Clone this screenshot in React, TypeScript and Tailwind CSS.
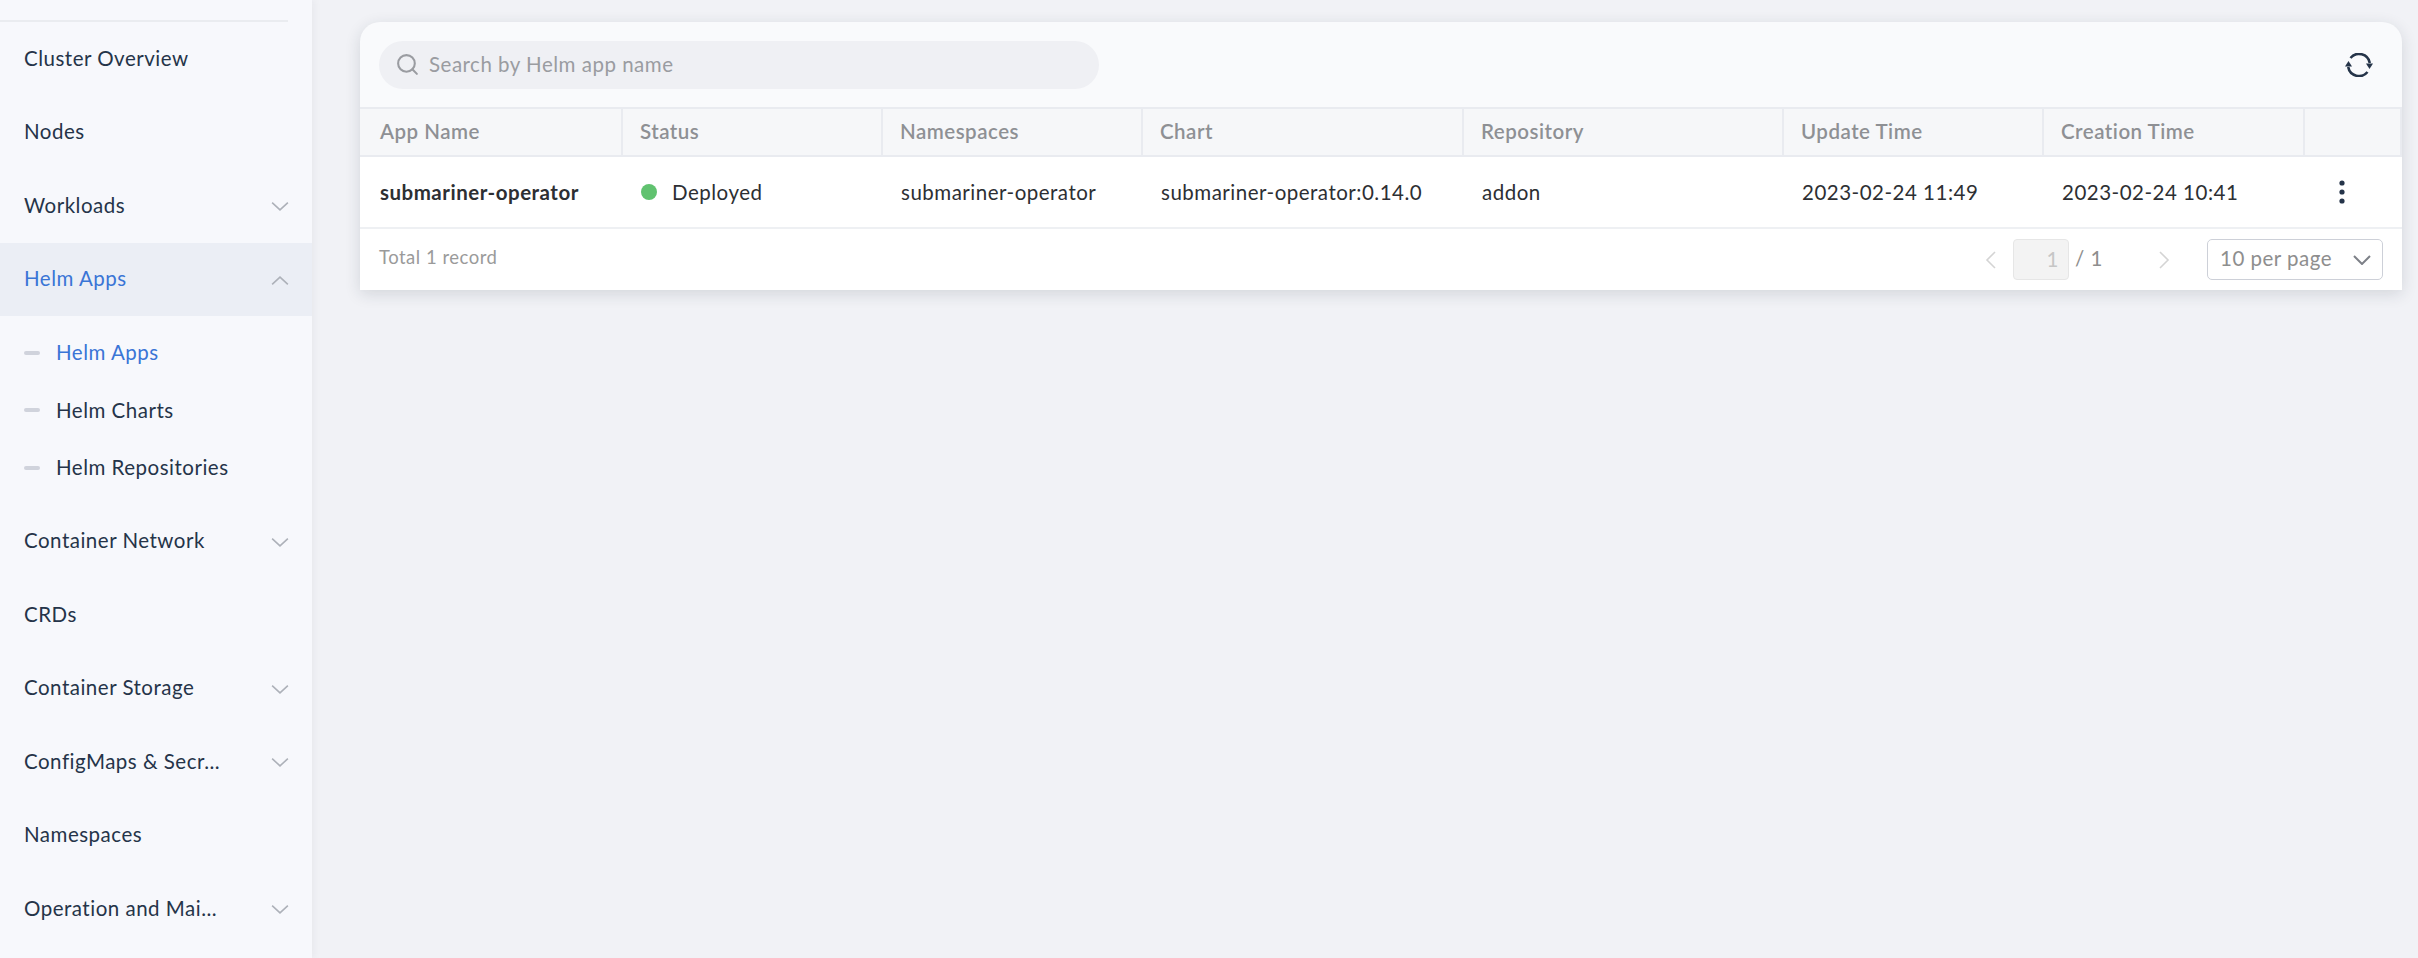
import { Search } from "lucide-react";

const columns = ["App Name", "Status", "Namespaces", "Chart", "Repository", "Update Time", "Creation Time", ""];

function Chevron({ up = false }: { up?: boolean }) {
  return (
    <svg width="16" height="9" viewBox="0 0 16 9" fill="none" className="mt-[2px] h-[11px] w-[18px] shrink-0">
      <path d={up ? "M1 8L8 1.5L15 8" : "M1 1L8 7.5L15 1"} stroke="#adb1b9" strokeWidth="1.4" />
    </svg>
  );
}

function NavItem({ label, expandable, open, active }: { label: string; expandable?: boolean; open?: boolean; active?: boolean }) {
  return (
    <div
      className={`flex h-[73.5px] items-center justify-between pl-[24px] pr-[23px] ${active ? "bg-[#ebeef5] text-[#3a75d6]" : "text-[#253449]"}`}
    >
      <span className="pb-[1px]">{label}</span>
      {expandable && <Chevron up={open} />}
    </div>
  );
}

function SubItem({ label, active }: { label: string; active?: boolean }) {
  return (
    <div className={`flex h-[57.5px] items-center pl-[24px] ${active ? "text-[#3a75d6]" : "text-[#253449]"}`}>
      <span className="mr-[16px] h-[4px] w-[16px] rounded-full bg-[#d0d3dc]" />
      <span>{label}</span>
    </div>
  );
}

function Sidebar() {
  return (
    <aside className="relative z-10 h-screen w-[312px] shrink-0 overflow-hidden bg-[#f7f8fc] shadow-[2px_0_8px_rgba(30,40,60,0.05)]">
      <div className="h-[22px] w-[288px] border-b-2 border-[#eaecf0]" />
      <NavItem label="Cluster Overview" />
      <NavItem label="Nodes" />
      <NavItem label="Workloads" expandable />
      <NavItem label="Helm Apps" expandable open active />
      <div className="py-[8px]">
        <SubItem label="Helm Apps" active />
        <SubItem label="Helm Charts" />
        <SubItem label="Helm Repositories" />
      </div>
      <NavItem label="Container Network" expandable />
      <NavItem label="CRDs" />
      <NavItem label="Container Storage" expandable />
      <NavItem label="ConfigMaps & Secr..." expandable />
      <NavItem label="Namespaces" />
      <NavItem label="Operation and Mai..." expandable />
    </aside>
  );
}

function RefreshIcon() {
  return (
    <svg width="28" height="24" viewBox="0 0 28 24" fill="none">
      <path d="M5.5 5A11 11 0 0 1 24.8 10" stroke="#253449" strokeWidth="2.6" />
      <path d="M3.2 14A11 11 0 0 0 22.5 19" stroke="#253449" strokeWidth="2.6" />
      <path d="M21 10.5H28L24.5 16Z" fill="#253449" />
      <path d="M0 13.5H7L3.5 8Z" fill="#253449" />
    </svg>
  );
}

function Toolbar() {
  return (
    <div className="flex h-[87px] items-center justify-between border-b-2 border-[#e9ebf0] pl-[19px] pr-[29px]">
      <div className="flex h-[48px] w-[720px] items-center rounded-full bg-[#eff0f4] pl-[16px]">
        <Search size={25} strokeWidth={2} className="mr-[9px] text-[#9a9ca1]" />
        <input
          placeholder="Search by Helm app name"
          className="flex-1 bg-transparent outline-none placeholder:text-[#9a9ca1]"
        />
      </div>
      <RefreshIcon />
    </div>
  );
}

function AppTable() {
  const grid = "grid grid-cols-[263px_260px_260px_321px_320px_260px_261px_97px]";
  return (
    <div>
      <div className={`${grid} h-[48px] border-b-2 border-[#e9ebf0] bg-[#f6f7f9] font-semibold text-[#8e9094]`}>
        {columns.map((c, i) => (
          <div key={i} className={`flex items-center border-r-2 border-[#e9ebf0] pb-[1px] ${i === 0 ? "pl-[20px]" : "pl-[17px]"}`}>
            {c}
          </div>
        ))}
      </div>
      <div className={`${grid} h-[72px] items-center border-b-2 border-[#eef0f3] text-[#2d2f33]`}>
        <div className="pl-[20px] font-bold">submariner-operator</div>
        <div className="flex items-center pl-[18px]">
          <span className="mr-[15px] h-[16px] w-[16px] rounded-full bg-[#60c26f]" />
          Deployed
        </div>
        <div className="pl-[18px]">submariner-operator</div>
        <div className="pl-[18px]">submariner-operator:0.14.0</div>
        <div className="pl-[18px]">addon</div>
        <div className="pl-[18px]">2023-02-24 11:49</div>
        <div className="pl-[18px]">2023-02-24 10:41</div>
        <div className="pl-[34px]">
          <svg width="6" height="24" viewBox="0 0 6 24" fill="#253449">
            <circle cx="3" cy="3" r="2.6" />
            <circle cx="3" cy="12" r="2.6" />
            <circle cx="3" cy="21" r="2.6" />
          </svg>
        </div>
      </div>
    </div>
  );
}

function Footer() {
  return (
    <div className="flex h-[61px] items-center justify-between bg-white pl-[19px] pr-[19px]">
      <span className="pb-[3px] text-[18.5px] text-[#9a9a9a]">Total 1 record</span>
      <div className="flex items-center">
        <svg width="12" height="20" viewBox="0 0 12 20" fill="none">
          <path d="M10 2L2 10L10 18" stroke="#d4d4d4" strokeWidth="1.6" />
        </svg>
        <input
          disabled
          value="1"
          readOnly
          className="ml-[16px] h-[41px] w-[56px] rounded-[4px] border border-[#e6e6e6] bg-[#f3f3f3] pb-[2px] pr-[9px] text-right text-[#c6c6c6]"
        />
        <span className="ml-[6px] w-[83px] pb-[2px] text-[#8e8e8e]">/ 1</span>
        <svg width="12" height="20" viewBox="0 0 12 20" fill="none">
          <path d="M2 2L10 10L2 18" stroke="#d4d4d4" strokeWidth="1.6" />
        </svg>
        <div className="ml-[37px] flex h-[41px] w-[176px] items-center justify-between rounded-[5px] border border-[#cdd0d8] pl-[12px] pr-[11px] text-[#8e8e8e]">
          <span className="pb-[2px]">10 per page</span>
          <svg width="18" height="10" viewBox="0 0 18 10" fill="none">
            <path d="M1 1L9 9L17 1" stroke="#7d8088" strokeWidth="2" />
          </svg>
        </div>
      </div>
    </div>
  );
}

export default function App() {
  return (
    <div className="flex h-screen overflow-hidden bg-[#f1f2f6] text-[20.5px] tracking-[0.5px] [font-family:Lato,sans-serif]">
      <Sidebar />
      <main className="flex-1 pl-[48px] pr-[16px] pt-[22px]">
        <div className="overflow-hidden rounded-t-[20px] bg-[#f9fafc] shadow-[0_4px_16px_rgba(30,40,60,0.14)]">
          <Toolbar />
          <div className="bg-white">
            <AppTable />
            <Footer />
          </div>
        </div>
      </main>
    </div>
  );
}
